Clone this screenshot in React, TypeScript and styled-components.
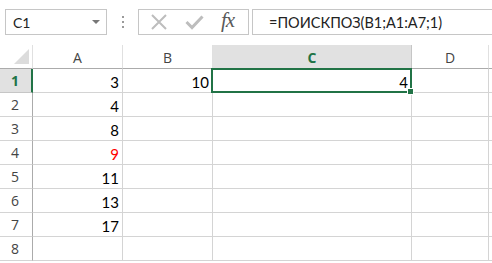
import React from 'react';
import styled, { createGlobalStyle } from 'styled-components';

const GREEN = '#217346';
const GRID = '#d4d4d4';

const Global = createGlobalStyle`
  body {
    margin: 0;
    background: #fff;
    font-family: "Lato", "Open Sans", sans-serif;
  }
`;

const Page = styled.div`
  width: 492px;
  height: 263px;
  overflow: hidden;
  background: #fff;
`;

const Toolbar = styled.div`
  height: 45px;
  box-sizing: border-box;
  padding: 9px 0 0 5px;
  display: flex;
  align-items: flex-start;
`;

const NameBox = styled.div`
  width: 102px;
  height: 26px;
  box-sizing: border-box;
  border: 1px solid #c6c6c6;
  display: flex;
  align-items: center;
  justify-content: space-between;
  padding: 0 6px 0 7px;
  font-size: 14px;
  color: #222;
`;

const Caret = styled.span`
  width: 0;
  height: 0;
  border-left: 4px solid transparent;
  border-right: 4px solid transparent;
  border-top: 4px solid #777;
`;

const Grip = styled.div`
  width: 31px;
  height: 26px;
  display: flex;
  flex-direction: column;
  align-items: center;
  justify-content: center;
  gap: 3px;
  span {
    width: 2px;
    height: 2px;
    background: #9a9a9a;
  }
`;

const IconBox = styled.div`
  width: 111px;
  height: 26px;
  box-sizing: border-box;
  border: 1px solid #c6c6c6;
  display: flex;
  align-items: center;
  gap: 17px;
  padding: 0 0 0 11px;
`;

const Fx = styled.span`
  font-family: "Liberation Serif", serif;
  font-style: italic;
  font-size: 21px;
  line-height: 1;
  color: #5a5a5a;
  letter-spacing: -1px;
  padding-bottom: 3px;
`;

const FormulaBox = styled.div`
  flex: 1;
  margin-left: 3px;
  margin-right: -6px;
  height: 26px;
  box-sizing: border-box;
  border: 1px solid #c6c6c6;
  display: flex;
  align-items: center;
  padding-left: 16px;
  font-size: 14.5px;
  color: #222;
`;

const Sheet = styled.div`
  display: grid;
  grid-template-columns: 33px 90px 90px 199px 77px 1fr;
  grid-auto-rows: 24px;
`;

const Corner = styled.div`
  position: relative;
  border-right: 1px solid #e0e0e0;
  border-bottom: 1px solid #ababab;
  &::after {
    content: '';
    position: absolute;
    right: 3px;
    bottom: 4px;
    width: 0;
    height: 0;
    border-left: 15px solid transparent;
    border-bottom: 15px solid #dcdcdc;
  }
`;

const ColHead = styled.div<{ $active?: boolean }>`
  box-sizing: border-box;
  display: flex;
  align-items: center;
  justify-content: center;
  font-family: "Open Sans", sans-serif;
  font-size: 14px;
  padding-top: 1px;
  color: ${p => (p.$active ? GREEN : '#444')};
  font-weight: ${p => (p.$active ? 700 : 400)};
  background: ${p => (p.$active ? '#e1e1e1' : '#fff')};
  border-right: 1px solid ${p => (p.$active ? '#c6c6c6' : '#e0e0e0')};
  border-bottom: ${p => (p.$active ? `2px solid ${GREEN}` : '1px solid #ababab')};
  margin-bottom: ${p => (p.$active ? '-1px' : '0')};
  position: relative;
  z-index: ${p => (p.$active ? 2 : 0)};
`;

const RowHead = styled.div<{ $active?: boolean }>`
  box-sizing: border-box;
  display: flex;
  align-items: center;
  padding-left: 11px;
  font-family: "Open Sans", sans-serif;
  font-size: 14px;
  color: ${p => (p.$active ? GREEN : '#444')};
  font-weight: ${p => (p.$active ? 700 : 400)};
  background: ${p => (p.$active ? '#e1e1e1' : '#fff')};
  border-bottom: 1px solid ${p => (p.$active ? '#c6c6c6' : GRID)};
  border-right: ${p => (p.$active ? `2px solid ${GREEN}` : '1px solid #ababab')};
`;

const Cell = styled.div<{ $red?: boolean; $active?: boolean }>`
  box-sizing: border-box;
  position: relative;
  display: flex;
  align-items: center;
  justify-content: flex-end;
  padding: 2px 3px 0 0;
  font-size: 15px;
  color: ${p => (p.$red ? '#ff0000' : '#000')};
  border-right: 1px solid ${GRID};
  border-bottom: 1px solid ${GRID};
  ${p =>
    p.$active &&
    `
    &::before {
      content: '';
      position: absolute;
      left: -2px;
      top: -1px;
      right: -1px;
      bottom: -1px;
      border: 2px solid ${GREEN};
      z-index: 3;
    }
    &::after {
      content: '';
      position: absolute;
      right: -3px;
      bottom: -3px;
      width: 5px;
      height: 5px;
      background: ${GREEN};
      border: 1px solid #fff;
      z-index: 4;
    }
  `}
`;

const XIcon = () => (
  <svg width="18" height="18" viewBox="0 0 18 18">
    <path d="M2 2 L16 16 M16 2 L2 16" stroke="#bdbdbd" strokeWidth="2" fill="none" />
  </svg>
);

const CheckIcon = () => (
  <svg width="19" height="18" viewBox="0 0 19 18">
    <path d="M1.5 9 L7 14.5 L17.5 3.5" stroke="#bdbdbd" strokeWidth="3" fill="none" />
  </svg>
);

const colA: Record<number, string> = { 1: '3', 2: '4', 3: '8', 4: '9', 5: '11', 6: '13', 7: '17' };

const App: React.FC = () => {
  const rows = [1, 2, 3, 4, 5, 6, 7, 8];
  return (
    <Page>
      <Global />
      <Toolbar>
        <NameBox>
          C1
          <Caret />
        </NameBox>
        <Grip>
          <span />
          <span />
          <span />
        </Grip>
        <IconBox>
          <XIcon />
          <CheckIcon />
          <Fx>fx</Fx>
        </IconBox>
        <FormulaBox>=ПОИСКПОЗ(B1;A1:A7;1)</FormulaBox>
      </Toolbar>
      <Sheet>
        <Corner />
        <ColHead>A</ColHead>
        <ColHead>B</ColHead>
        <ColHead $active>C</ColHead>
        <ColHead>D</ColHead>
        <ColHead />
        {rows.map(r => (
          <React.Fragment key={r}>
            <RowHead $active={r === 1}>{r}</RowHead>
            <Cell $red={r === 4}>{colA[r] ?? ''}</Cell>
            <Cell>{r === 1 ? '10' : ''}</Cell>
            <Cell $active={r === 1}>{r === 1 ? '4' : ''}</Cell>
            <Cell />
            <Cell />
          </React.Fragment>
        ))}
      </Sheet>
    </Page>
  );
};

export default App;
